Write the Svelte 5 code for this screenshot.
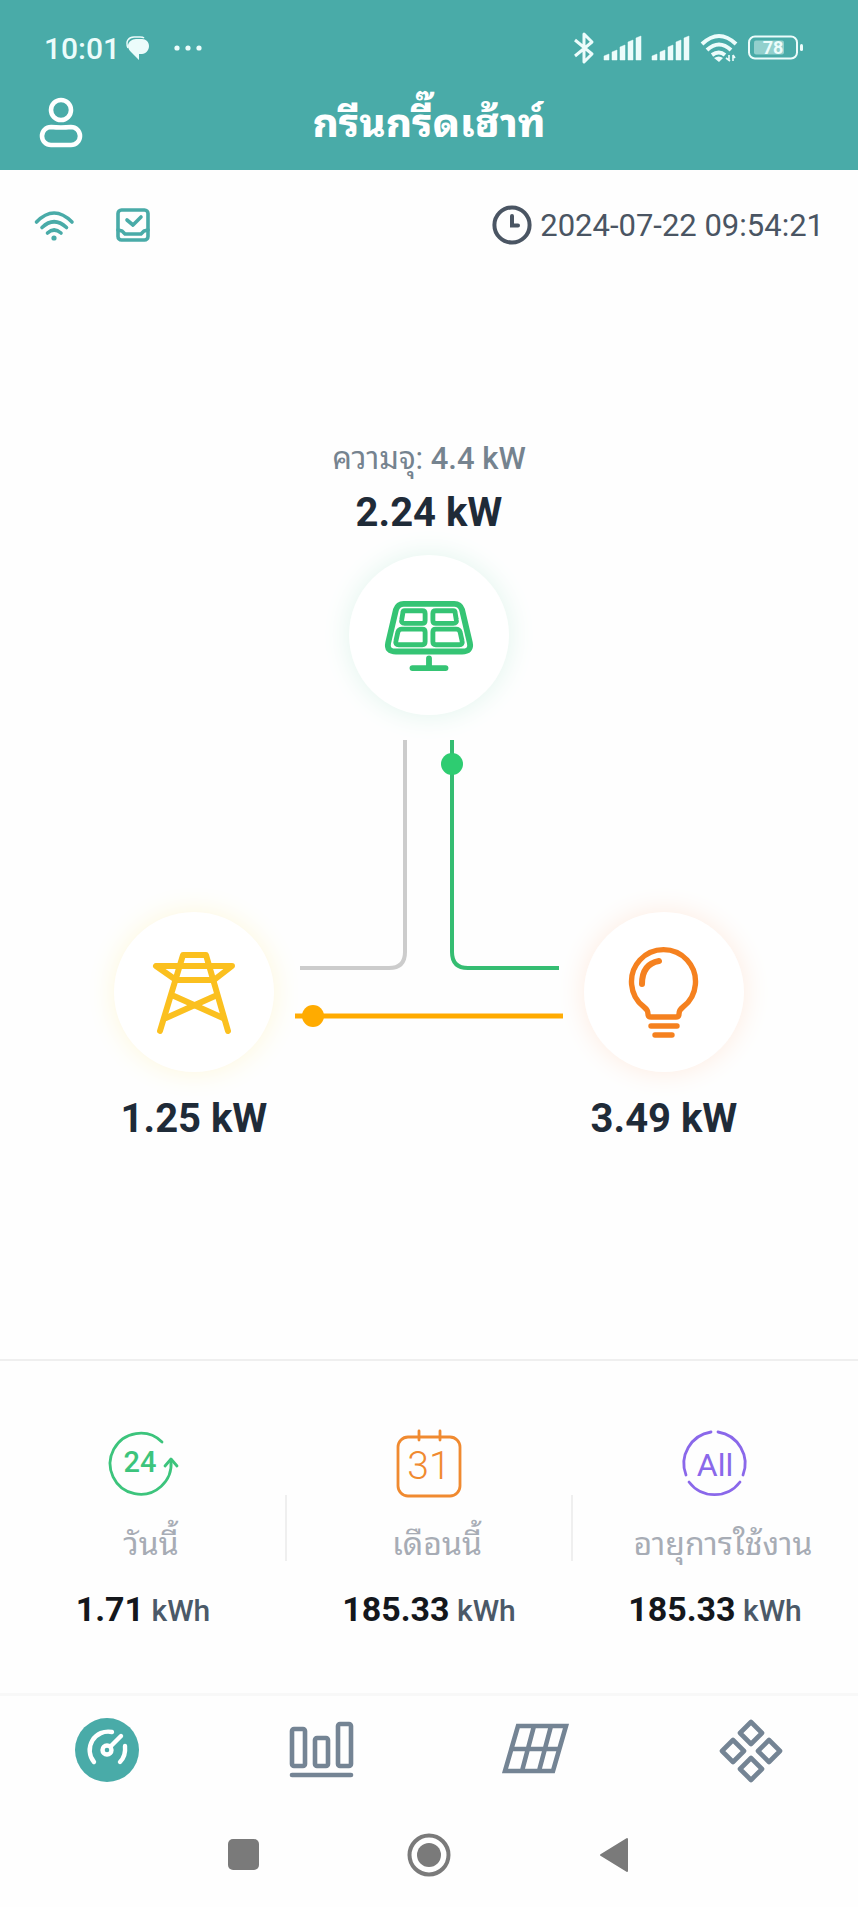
<script>
  const title = 'กรีนกรี๊ดเฮ้าท์';
  const updatedAt = '2024-07-22 09:54:21';

  const flow = { capacity: '4.4 kW', solar: '2.24 kW', grid: '1.25 kW', load: '3.49 kW' };

  const stats = [
    { id: 'today', label: 'วันนี้', value: '1.71' },
    { id: 'month', label: 'เดือนนี้', value: '185.33' },
    { id: 'total', label: 'อายุการใช้งาน', value: '185.33' }
  ];

  const tabs = [
    { id: 'overview', name: 'Overview' },
    { id: 'charts', name: 'Charts' },
    { id: 'panels', name: 'Panels' },
    { id: 'more', name: 'More' }
  ];

  let activeTab = $state('overview');

  const signalBars = [6, 10, 15, 20, 24];
</script>

{#snippet signal()}
  <svg width="38" height="26" viewBox="0 0 38 26" fill="currentColor">
    {#each signalBars as h, i}
      <path d="M{i * 8} 25v-{h - 2}l5-2v{h}z" stroke="currentColor" stroke-width="0.5" stroke-linejoin="round" />
    {/each}
  </svg>
{/snippet}

<div class="app">
  <header>
    <div class="status">
      <div class="status-left">
        <span class="time">10:01</span>
        <svg class="chat" width="24" height="24" viewBox="0 0 24 24">
          <path d="M2 12C-1 5 3 1 8 1h6q3 0 4 1" fill="none" stroke="currentColor" stroke-width="1.5" />
          <path d="M10 3h6c4 0 7 3 7 7s-3 8-7 8h-3v6l-7-7c-2-2-4-4-4-7 0-4 4-7 8-7z" fill="currentColor" />
        </svg>
        <svg class="dots" width="28" height="6" viewBox="0 0 28 6" fill="currentColor">
          <circle cx="3" cy="3" r="2.6" /><circle cx="14" cy="3" r="2.6" /><circle cx="25" cy="3" r="2.6" />
        </svg>
      </div>
      <div class="status-right">
        <svg width="20" height="32" viewBox="0 0 20 32" fill="none" stroke="currentColor" stroke-width="3" stroke-linejoin="round">
          <path d="M1 8l17 14-8 8V2l8 8L1 24" />
        </svg>
        {@render signal()}
        {@render signal()}
        <svg width="38" height="30" viewBox="0 0 38 30" fill="none" stroke="currentColor" stroke-width="4">
          <path d="M2 11Q19-5 36 11M7 17Q19 6 31 17M12 22q7-5 13 0" />
          <path d="M14 25q5-3 9 0l-4 4z" fill="currentColor" stroke="none" />
          <path d="M29 22v6m1 0l-4-3M33 28v-6m0 0l2 3" stroke-width="1.6" />
        </svg>
        <svg width="56" height="26" viewBox="0 0 56 26">
          <rect x="1" y="1.5" width="48" height="22" rx="6" fill="none" stroke="currentColor" stroke-width="2" />
          <rect x="6" y="5.5" width="30" height="14" rx="2" fill="currentColor" opacity="0.45" />
          <rect x="52" y="9" width="3" height="7" rx="1.5" fill="currentColor" />
          <text x="25" y="19" text-anchor="middle" class="battery-text">78</text>
        </svg>
      </div>
    </div>
    <div class="title-bar">
      <button class="profile" aria-label="Profile">
        <svg width="42" height="50" viewBox="0 0 42 50" fill="none" stroke="currentColor" stroke-width="4.6">
          <circle cx="21" cy="12" r="10" />
          <path d="M11 29q10 1 20 0a9 9 0 0 1 0 18H11a9 9 0 0 1 0-18z" />
        </svg>
      </button>
      <h1>{title}</h1>
    </div>
  </header>

  <div class="info">
    <div class="links">
      <svg width="40" height="32" viewBox="0 0 40 32" fill="none" stroke="currentColor" stroke-width="3.6" stroke-linecap="round">
        <path d="M2.5 13Q20-5 38 13M8 18.5Q20 7 32.5 18.5M13.5 24Q20 18 27 24" />
        <circle cx="20" cy="29" r="2.6" fill="currentColor" stroke="none" />
      </svg>
      <svg width="34" height="34" viewBox="0 0 34 34" fill="none" stroke="currentColor" stroke-width="3.6" stroke-linecap="round" stroke-linejoin="round">
        <rect x="2" y="2" width="30" height="30" rx="3.5" />
        <path d="M2 22l4 1 3 3h16l3-3 4-1" />
        <path d="M11 12l6 5 8-8" />
      </svg>
    </div>
    <div class="updated">
      <svg width="40" height="40" viewBox="0 0 40 40" fill="none" stroke="currentColor" stroke-width="4">
        <circle cx="20" cy="20" r="17.6" />
        <path d="M20 11v9.5h6" stroke-linecap="round" />
      </svg>
      <time>{updatedAt}</time>
    </div>
  </div>

  <main>
    <section class="flow">
      <div class="node solar">
        <p class="capacity">ความจุ: <b>{flow.capacity}</b></p>
        <p class="power">{flow.solar}</p>
        <div class="disc">
          <svg width="88" height="70" viewBox="0 0 90 72" fill="none" stroke="currentColor" stroke-width="6" stroke-linejoin="round" stroke-linecap="round">
            <path d="M19 4h52q6 0 8 6l8 34q2 9-8 9H11q-10 0-8-9l8-34q2-6 8-6z" />
            <path d="M20 11h18q3 0 3 3v7q0 3-3 3H20q-4 0-3-4l1-6q0-3 2-3zM70 11H52q-3 0-3 3v7q0 3 3 3h18q4 0 3-4l-1-6q0-3-2-3zM17 30h21q3 0 3 3v10q0 3-3 3H14q-4 0-3-4l2-9q1-3 4-3zM73 30H52q-3 0-3 3v10q0 3 3 3h24q4 0 3-4l-2-9q-1-3-4-3z" stroke-width="5" />
            <path d="M45 60v8M28 70h34" />
          </svg>
        </div>
      </div>

      <svg class="wires" width="310" height="288" viewBox="0 0 310 288" fill="none" stroke-width="4">
        <path d="M131 0v212q0 16-16 16H26" stroke="#cccccc" />
        <path d="M178 0v212q0 16 16 16h91" stroke="#35bd72" />
        <path d="M21 276h268" stroke="#ffab00" stroke-width="5" />
        <circle cx="178" cy="24" r="11" fill="#2ecc71" />
        <circle cx="39" cy="276" r="11" fill="#ffab00" />
      </svg>

      <div class="node grid">
        <div class="disc">
          <svg width="84" height="84" viewBox="0 0 84 84" fill="none" stroke="currentColor" stroke-width="6" stroke-linecap="round" stroke-linejoin="round">
            <path d="M8 81L31 5h23l22 76" />
            <path d="M4 16h76L62 30H24z" />
            <path d="M22 46l49 22M63 46L14 68" />
          </svg>
        </div>
        <p class="power">{flow.grid}</p>
      </div>

      <div class="node load">
        <div class="disc">
          <svg width="70" height="90" viewBox="0 0 70 90" fill="none" stroke="currentColor" stroke-width="5.4" stroke-linecap="round" stroke-linejoin="round">
            <path d="M22 70q-3 0-3-3 0-4-4-7A32 32 0 1 1 54 60q-4 3-4 7 0 3-3 3z" />
            <path d="M13 37Q13 17 30 14" stroke-width="6" />
            <path d="M22 79h26M26 88h17" />
          </svg>
        </div>
        <p class="power">{flow.load}</p>
      </div>
    </section>

    <section class="stats">
      {#each stats as stat (stat.id)}
        <div class="stat {stat.id}">
          <svg width="70" height="70" viewBox="0 0 70 70" fill="none" stroke="currentColor" stroke-width="2.8" stroke-linecap="round" stroke-linejoin="round">
            {#if stat.id === 'today'}
              <path d="M54 13A30.5 30.5 0 1 0 63 32" />
              <path d="M57 37l6-7 6 7" />
              <text x="32" y="43" font-size="29" font-weight="500" text-anchor="middle">24</text>
            {:else if stat.id === 'month'}
              <rect x="4" y="8" width="62" height="59" rx="10" />
              <path d="M25 2v9M46 2v9" />
              <text x="35" y="50" font-size="39" font-weight="300" text-anchor="middle">31</text>
            {:else}
              <path d="M31 3A32 32 0 0 0 6 46M38 3A32 32 0 0 1 63 46M9 53a32 32 0 0 0 51 0" />
              <text x="35" y="47" font-size="32" font-weight="400" text-anchor="middle">All</text>
            {/if}
          </svg>
          <p class="label">{stat.label}</p>
          <p class="energy"><b>{stat.value}</b> kWh</p>
        </div>
      {/each}
    </section>
  </main>

  <nav class="tabs">
    {#each tabs as tab (tab.id)}
      <button class:active={activeTab === tab.id} aria-label={tab.name} onclick={() => (activeTab = tab.id)}>
        <svg width="68" height="64" viewBox="0 0 68 64" fill="none" stroke="currentColor" stroke-width="4.6" stroke-linecap="round" stroke-linejoin="round">
          {#if tab.id === 'overview'}
            <circle cx="34" cy="32" r="32" fill="currentColor" stroke="none" />
            <g stroke="#ffffff" stroke-width="4.4">
              <path d="M21 44A18.5 18.5 0 0 1 39 14M52 28Q53 38 47 44" />
              <circle cx="34" cy="32" r="4.5" />
              <path d="M38 28l10-10" />
            </g>
          {:else if tab.id === 'charts'}
            <rect x="4" y="11" width="13" height="37" rx="2" />
            <rect x="27" y="20" width="13" height="28" rx="2" />
            <rect x="50" y="6" width="13" height="42" rx="2" />
            <path d="M4 57h59" />
          {:else if tab.id === 'panels'}
            <path d="M16 8h48L51 53H3zM10 31h49M32 8L20 53M49 8L37 53" stroke-linejoin="miter" stroke-linecap="butt" />
          {:else}
            <path d="M34 4l11 11-11 11-11-11zM34 40l11 11-11 11-11-11zM16 22l11 11-11 11L5 33zM52 22l11 11-11 11-11-11z" />
          {/if}
        </svg>
      </button>
    {/each}
  </nav>

  <div class="system">
    <button aria-label="Recent apps">
      <svg width="32" height="32" viewBox="0 0 32 32"><rect width="31" height="31" rx="5" fill="currentColor" /></svg>
    </button>
    <button aria-label="Home">
      <svg width="44" height="44" viewBox="0 0 44 44">
        <circle cx="22" cy="22" r="19.5" fill="none" stroke="currentColor" stroke-width="4" />
        <circle cx="22" cy="22" r="12" fill="currentColor" />
      </svg>
    </button>
    <button aria-label="Back">
      <svg width="30" height="36" viewBox="0 0 30 36">
        <path d="M28 2v32L2 18z" fill="currentColor" stroke="currentColor" stroke-width="2" stroke-linejoin="round" />
      </svg>
    </button>
  </div>
</div>

<style>
  :global(body) {
    margin: 0;
    background: #fefefe;
  }

  .app {
    font-family: Roboto, 'Noto Sans Thai Looped', Loma, 'Noto Sans Thai', 'Noto Sans', sans-serif;
    color: #1f2b38;
  }

  p, h1 { margin: 0; }
  svg { display: block; flex-shrink: 0; overflow: visible; }
  button {
    display: flex;
    align-items: center;
    justify-content: center;
    padding: 0;
    border: 0;
    background: none;
    color: inherit;
    cursor: pointer;
  }

  header {
    background: #49aba8;
    color: #ffffff;
  }
  .status {
    display: flex;
    justify-content: space-between;
    align-items: center;
    height: 96px;
    padding: 0 54px 0 44px;
    color: #ecfcfb;
  }
  .status-left, .status-right {
    display: flex;
    align-items: center;
  }
  .status-right { gap: 10px; }
  .time {
    font-size: 30px;
    font-weight: 500;
    line-height: 40px;
    padding-top: 2px;
  }
  .chat { margin-left: 6px; }
  .dots { margin-left: 24px; }
  .battery-text {
    font-size: 18px;
    font-weight: 700;
    fill: currentColor;
  }

  .title-bar {
    display: grid;
    grid-template-columns: 42px 1fr 42px;
    align-items: center;
    height: 74px;
    padding: 0 40px 20px;
    box-sizing: border-box;
  }
  h1 {
    padding-top: 2px;
    font-size: 40px;
    font-weight: 800;
    line-height: 52px;
    text-align: center;
    white-space: nowrap;
  }

  .info {
    display: flex;
    justify-content: space-between;
    align-items: center;
    height: 110px;
    padding: 0 34px;
  }
  .links {
    display: flex;
    align-items: center;
    gap: 42px;
    color: #49aba8;
  }
  .updated {
    display: flex;
    align-items: center;
    gap: 8px;
    color: #4a5563;
    font-size: 31px;
    line-height: 40px;
  }
  time { padding-top: 2px; }

  .flow {
    display: grid;
    grid-template-columns: 160px 310px 160px;
    justify-content: center;
    row-gap: 25px;
    padding: 156px 0 214px;
  }
  .node {
    display: flex;
    flex-direction: column;
    align-items: center;
  }
  .solar {
    grid-column: 1 / 4;
    color: #35c474;
  }
  .wires {
    grid-column: 2;
    grid-row: 2;
  }
  .grid, .load {
    grid-row: 2;
    padding-top: 172px;
  }
  .grid {
    grid-column: 1;
    color: #fbc01f;
  }
  .load {
    grid-column: 3;
    color: #f5811f;
  }
  .disc {
    display: flex;
    align-items: center;
    justify-content: center;
    width: 160px;
    height: 160px;
    border-radius: 50%;
    background: #ffffff;
  }
  .solar .disc {
    margin-top: 16px;
    box-shadow: 0 0 28px #e2f6ee;
  }
  .grid .disc { box-shadow: 0 0 28px #fff9dc; }
  .load .disc { box-shadow: 0 0 28px #ffece0; }
  .grid .power, .load .power { margin-top: 21px; }

  .capacity {
    margin-bottom: 5px;
    color: #75838f;
    font-size: 31px;
    line-height: 46px;
  }
  .capacity b { font-weight: 500; }
  .power {
    color: #1f2b38;
    font-size: 40px;
    font-weight: 700;
    line-height: 52px;
    white-space: nowrap;
  }

  .stats {
    display: grid;
    grid-template-columns: repeat(3, 1fr);
    border-top: 2px solid #efefef;
    padding: 68px 0 60px;
  }
  .stat {
    position: relative;
    display: flex;
    flex-direction: column;
    align-items: center;
  }
  .stat + .stat::before {
    content: '';
    position: absolute;
    left: -1px;
    top: 66px;
    width: 2px;
    height: 66px;
    background: #efefef;
  }
  .stat text {
    fill: currentColor;
    stroke: none;
  }
  .today { color: #3cc47c; }
  .month { color: #f08a30; }
  .total { color: #8a68ea; }
  .label {
    margin-top: 22px;
    padding-left: 16px;
    color: #a7acb5;
    font-size: 32px;
    line-height: 46px;
    white-space: nowrap;
  }
  .energy {
    margin-top: 20px;
    color: #4b5968;
    font-size: 30px;
    font-weight: 500;
    line-height: 44px;
  }
  .energy b {
    color: #14171c;
    font-size: 34px;
    font-weight: 700;
  }

  .tabs {
    display: grid;
    grid-template-columns: repeat(4, 1fr);
    height: 108px;
    border-top: 3px solid #f8f8f8;
    color: #748494;
  }
  .tabs .active { color: #49aba8; }

  .system {
    display: grid;
    grid-template-columns: repeat(3, 185px);
    justify-content: center;
    height: 102px;
    color: #7a7a7a;
  }
</style>
